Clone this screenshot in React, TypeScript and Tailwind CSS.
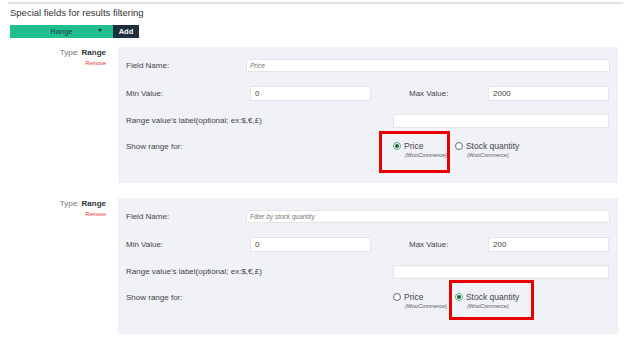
import React from "react";

type RadioProps = { label: string; checked?: boolean };

const Radio: React.FC<RadioProps> = ({ label, checked }) => (
  <div className="flex items-start gap-[3px]">
    <span
      className={`mt-[1px] flex h-[8px] w-[8px] items-center justify-center rounded-full border bg-white ${
        checked ? "border-[#5aa57a]" : "border-[#666]"
      }`}
    >
      {checked && <span className="h-[4px] w-[4px] rounded-full bg-[#1d5e35]" />}
    </span>
    <div className="flex flex-col">
      <span className="text-[8.5px] leading-[10px] text-[#444]">{label}</span>
      <span className="ml-[1px] mt-[1px] text-[5.5px] italic leading-[7px] text-[#555]">
        (WooCommerce)
      </span>
    </div>
  </div>
);

type RangeBlockProps = {
  placeholder: string;
  min: string;
  max: string;
  stock?: boolean;
  className?: string;
};

const RangeBlock: React.FC<RangeBlockProps> = ({ placeholder, min, max, stock, className }) => (
  <div className={`flex ${className ?? ""}`}>
    <div className="flex w-[106px] flex-col items-end pt-[1px]">
      <div className="text-[8px] leading-[10px]">
        <span className="text-[#777]">Type: </span>
        <span className="font-bold text-[#333]">Range</span>
      </div>
      <div className="mt-[2px] text-[5.5px] leading-[7px] text-[#e8302a]">Remove</div>
    </div>
    <div className="relative ml-[12px] h-[136px] w-[500px] bg-[#f1f2f7] px-[8px] text-[8px] text-[#444]">
      <div className="mt-[12px] flex h-[13px] items-center">
        <span className="w-[120px]">Field Name:</span>
        <div className="flex h-full flex-1 items-center border border-[#e3e5ea] bg-white px-[3px] text-[6.5px] italic text-[#777]">
          {placeholder}
        </div>
      </div>
      <div className="mt-[14px] flex h-[15px] items-center">
        <span className="w-[124px]">Min Value:</span>
        <div className="flex h-full w-[121px] items-center border border-[#e3e5ea] bg-white px-[4px] text-[#444]">
          {min}
        </div>
        <span className="ml-[38px] w-[79px]">Max Value:</span>
        <div className="flex h-full w-[121px] items-center border border-[#e3e5ea] bg-white px-[4px] text-[#444]">
          {max}
        </div>
      </div>
      <div className="mt-[13px] flex h-[14px] items-center">
        <span className="w-[267px]">Range value's label(optional; ex:$,€,£)</span>
        <div className="h-full w-[216px] border border-[#e3e5ea] bg-white" />
      </div>
      <div className="mt-[13px] flex items-start">
        <span className="mt-[1px] w-[267px] leading-[10px]">Show range for:</span>
        <div className="flex gap-[8px]">
          <Radio label="Price" checked={!stock} />
          <Radio label="Stock quantity" checked={stock} />
        </div>
      </div>
      {stock ? (
        <div className="absolute left-[331px] top-[82px] h-[40px] w-[85px] border-[3px] border-[#e60000]" />
      ) : (
        <div className="absolute left-[261px] top-[84px] h-[42px] w-[71px] border-[3px] border-[#e60000]" />
      )}
    </div>
  </div>
);

const App: React.FC = () => (
  <div className="h-[344px] w-[632px] overflow-hidden bg-white font-['Liberation_Sans',Arial,sans-serif]">
    <div className="ml-[8px] mt-[2px] h-[2px] w-[615px] bg-[#e2e2e2]" />
    <h2 className="ml-[10px] mt-[3px] text-[9.5px] leading-[12px] text-[#333]">
      Special fields for results filtering
    </h2>
    <div className="ml-[10px] mt-[6px] flex h-[13px]">
      <div className="relative flex w-[103px] items-center justify-center bg-[#22bf8e] text-[7.5px] text-[#1f3a4a]">
        Range
        <span className="absolute left-[88px] top-[4px] h-0 w-0 border-x-[2.5px] border-t-[3px] border-x-transparent border-t-[#1f2d3d]" />
      </div>
      <div className="flex w-[26px] items-center justify-center bg-[#1f2d3d] text-[7.5px] font-bold text-white">
        Add
      </div>
    </div>
    <RangeBlock className="mt-[9px]" placeholder="Price" min="0" max="2000" />
    <RangeBlock className="mt-[15px]" placeholder="Filter by stock quantity" min="0" max="200" stock />
  </div>
);

export default App;
